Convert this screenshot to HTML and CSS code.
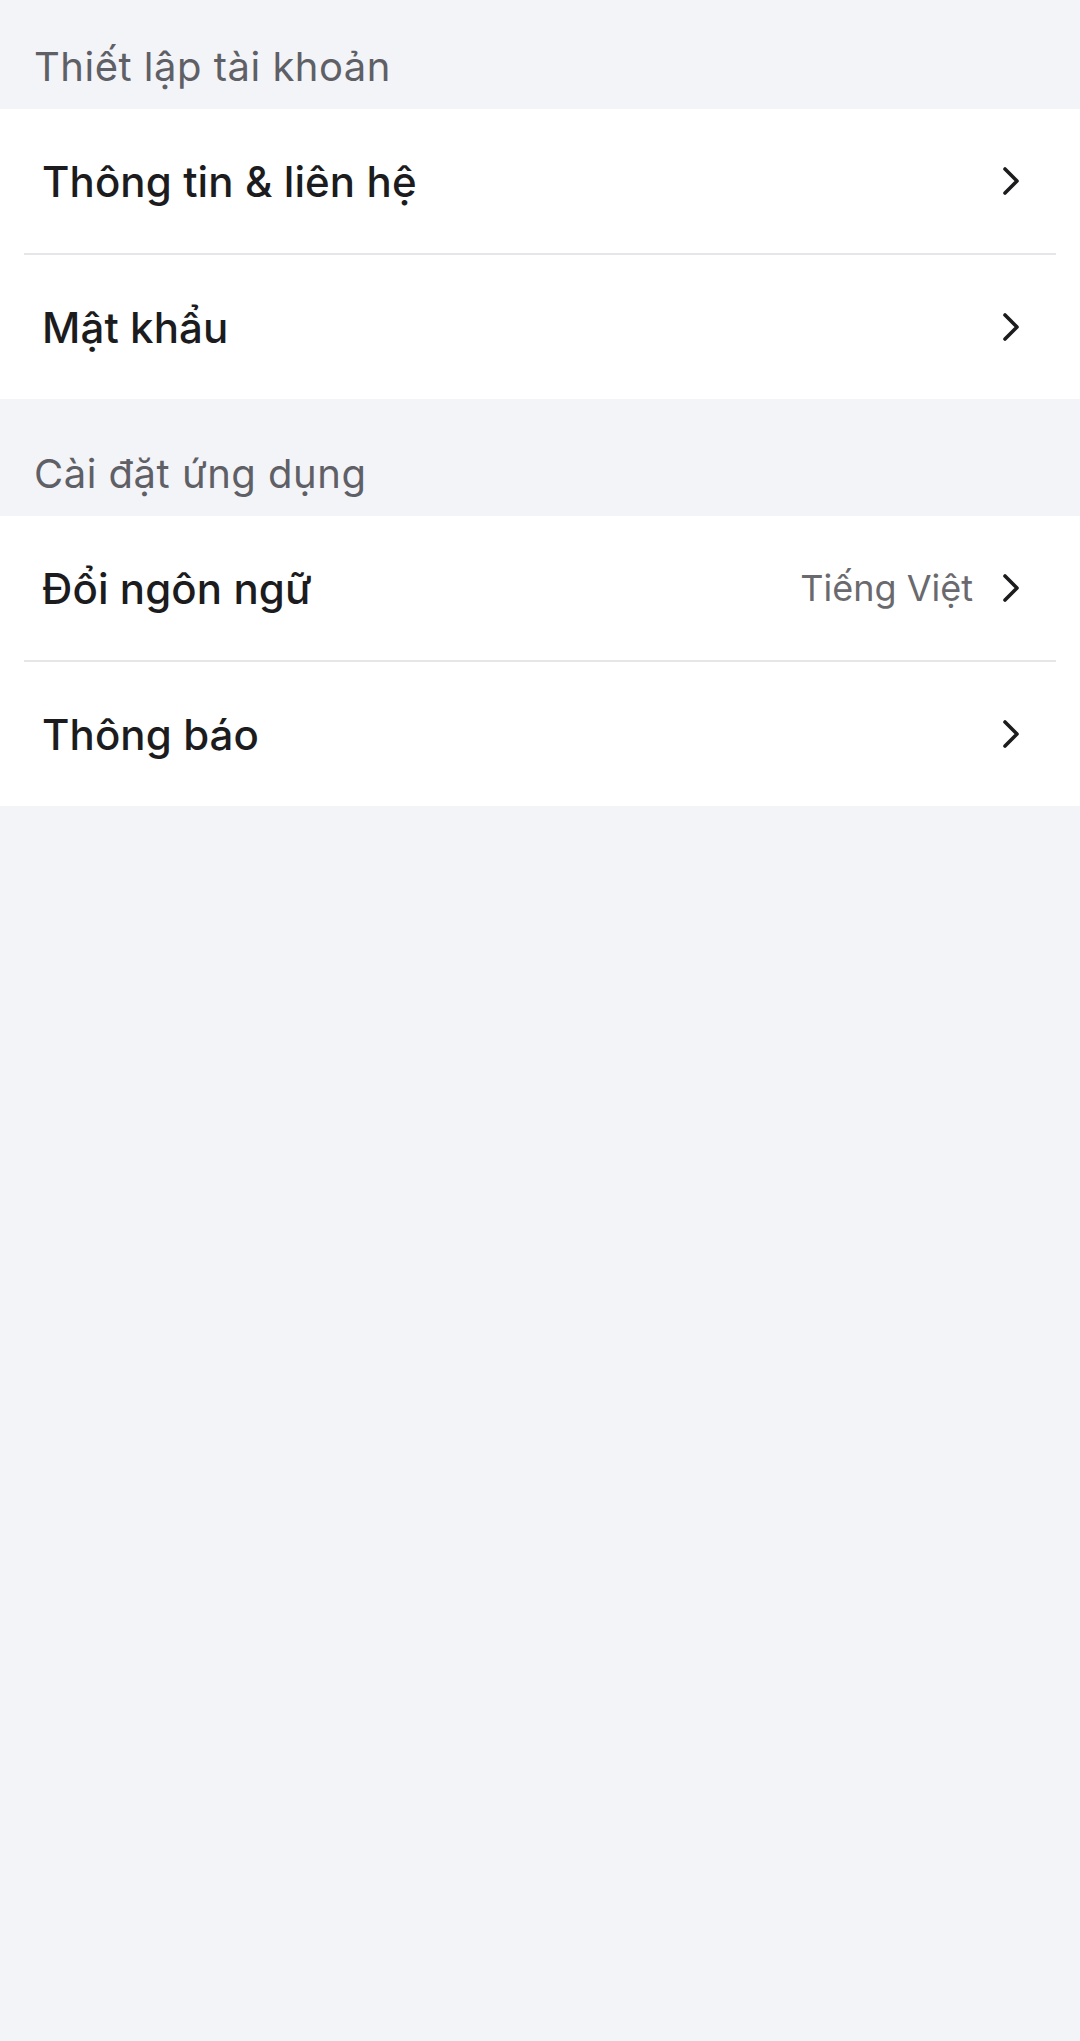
FILE: index.html
```html
<!DOCTYPE html>
<html lang="vi">
<head>
<meta charset="utf-8">
<link rel="stylesheet" href="styles.css">
</head>
<body>
<div class="page">
  <div class="section-title first">Thiết lập tài khoản</div>
  <div class="group">
    <div class="row">
      <span class="label">Thông tin &amp; liên hệ</span>
      <span class="right">
        <svg class="chev" width="20" height="30" viewBox="0 0 20 30"><polyline points="4,3 16,15 4,27" fill="none" stroke="#1c1c1e" stroke-width="3.6" stroke-linecap="round" stroke-linejoin="round"/></svg>
      </span>
    </div>
    <div class="row">
      <span class="label">Mật khẩu</span>
      <span class="right">
        <svg class="chev" width="20" height="30" viewBox="0 0 20 30"><polyline points="4,3 16,15 4,27" fill="none" stroke="#1c1c1e" stroke-width="3.6" stroke-linecap="round" stroke-linejoin="round"/></svg>
      </span>
    </div>
  </div>
  <div class="section-title second">Cài đặt ứng dụng</div>
  <div class="group">
    <div class="row">
      <span class="label">Đổi ngôn ngữ</span>
      <span class="right">
        <span class="value">Tiếng Việt</span>
        <svg class="chev" width="20" height="30" viewBox="0 0 20 30"><polyline points="4,3 16,15 4,27" fill="none" stroke="#1c1c1e" stroke-width="3.6" stroke-linecap="round" stroke-linejoin="round"/></svg>
      </span>
    </div>
    <div class="row">
      <span class="label">Thông báo</span>
      <span class="right">
        <svg class="chev" width="20" height="30" viewBox="0 0 20 30"><polyline points="4,3 16,15 4,27" fill="none" stroke="#1c1c1e" stroke-width="3.6" stroke-linecap="round" stroke-linejoin="round"/></svg>
      </span>
    </div>
  </div>
</div>
</body>
</html>
```
FILE: styles.css
```css
html, body {
  margin: 0;
  padding: 0;
  background: #f3f4f8;
}
body {
  font-family: Inter, "Noto Sans", "Liberation Sans", sans-serif;
  width: 1080px;
  min-height: 2041px;
}
.section-title {
  box-sizing: border-box;
  display: flex;
  align-items: flex-end;
  padding: 0 0 19px 34px;
  font-size: 40px;
  line-height: 46px;
  letter-spacing: 0.5px;
  font-weight: 400;
  color: #5f6066;
}
.section-title.first {
  height: 109px;
}
.section-title.second {
  height: 117px;
}
.group {
  background: #ffffff;
}
.row {
  display: flex;
  align-items: center;
  justify-content: space-between;
  height: 144px;
  margin: 0 24px;
  padding: 0 35px 0 18px;
  border-bottom: 2px solid #e6e6e8;
}
.row:last-child {
  border-bottom: none;
}
.label {
  font-size: 42px;
  font-weight: 450;
  letter-spacing: 0.1px;
  color: #1c1c1e;
}
.right {
  display: flex;
  align-items: center;
  gap: 28px;
}
.value {
  font-size: 36px;
  color: #6a6a6e;
}
.chev {
  display: block;
}
```
